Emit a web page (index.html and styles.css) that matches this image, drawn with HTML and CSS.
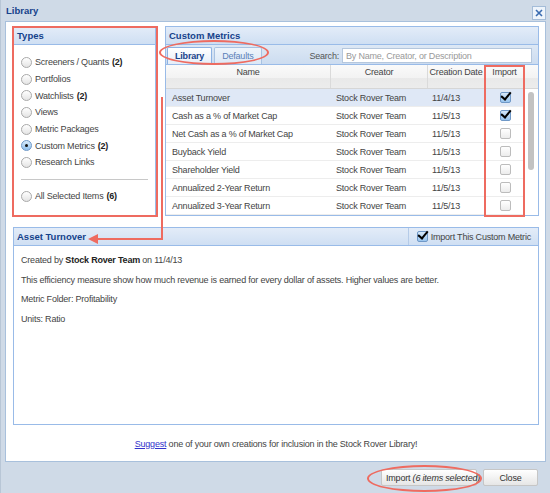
FILE: index.html
```html
<!DOCTYPE html>
<html lang="en">
<head>
    <meta charset="UTF-8">
    <title>Library</title>
    <link rel="stylesheet" href="styles.css">
</head>
<body>
    <div class="window">
        <div class="win-title">
            <span>Library</span>
            <span class="win-close">
                <svg width="10" height="10" viewBox="0 0 10 10"><path d="M2 2 L8 8 M8 2 L2 8" stroke="#3a6bb0" stroke-width="1.6"/></svg>
            </span>
        </div>

        <div class="win-body">
            <div class="top-row">
                <div class="panel types">
                    <div class="panel-header">Types</div>
                    <div class="types-body">
                        <label class="radio"><span class="dot"></span>Screeners / Quants <b>(2)</b></label>
                        <label class="radio"><span class="dot"></span>Portfolios</label>
                        <label class="radio"><span class="dot"></span>Watchlists <b>(2)</b></label>
                        <label class="radio"><span class="dot"></span>Views</label>
                        <label class="radio"><span class="dot"></span>Metric Packages</label>
                        <label class="radio"><span class="dot on"></span>Custom Metrics <b>(2)</b></label>
                        <label class="radio"><span class="dot"></span>Research Links</label>
                        <div class="sep"></div>
                        <label class="radio"><span class="dot"></span>All Selected Items <b>(6)</b></label>
                    </div>
                </div>

                <div class="panel metrics">
                    <div class="panel-header">Custom Metrics</div>
                    <div class="tabbar">
                        <span class="tab active">Library</span>
                        <span class="tab">Defaults</span>
                        <span class="search-label">Search:</span>
                        <span class="search-box">By Name, Creator, or Description</span>
                    </div>
                    <div class="grid">
                        <div class="grid-head">
                            <span class="c-name">Name</span>
                            <span class="c-creator">Creator</span>
                            <span class="c-date">Creation Date</span>
                            <span class="c-import">Import</span>
                            <span class="c-scroll"></span>
                        </div>
                        <div class="grid-rows">
                            <div class="row selected">
                                <span class="c-name">Asset Turnover</span>
                                <span class="c-creator">Stock Rover Team</span>
                                <span class="c-date">11/4/13</span>
                                <span class="c-import"><span class="check on"></span></span>
                            </div>
                            <div class="row">
                                <span class="c-name">Cash as a % of Market Cap</span>
                                <span class="c-creator">Stock Rover Team</span>
                                <span class="c-date">11/5/13</span>
                                <span class="c-import"><span class="check on"></span></span>
                            </div>
                            <div class="row">
                                <span class="c-name">Net Cash as a % of Market Cap</span>
                                <span class="c-creator">Stock Rover Team</span>
                                <span class="c-date">11/5/13</span>
                                <span class="c-import"><span class="check"></span></span>
                            </div>
                            <div class="row">
                                <span class="c-name">Buyback Yield</span>
                                <span class="c-creator">Stock Rover Team</span>
                                <span class="c-date">11/5/13</span>
                                <span class="c-import"><span class="check"></span></span>
                            </div>
                            <div class="row">
                                <span class="c-name">Shareholder Yield</span>
                                <span class="c-creator">Stock Rover Team</span>
                                <span class="c-date">11/5/13</span>
                                <span class="c-import"><span class="check"></span></span>
                            </div>
                            <div class="row">
                                <span class="c-name">Annualized 2-Year Return</span>
                                <span class="c-creator">Stock Rover Team</span>
                                <span class="c-date">11/5/13</span>
                                <span class="c-import"><span class="check"></span></span>
                            </div>
                            <div class="row">
                                <span class="c-name">Annualized 3-Year Return</span>
                                <span class="c-creator">Stock Rover Team</span>
                                <span class="c-date">11/5/13</span>
                                <span class="c-import"><span class="check"></span></span>
                            </div>
                            <div class="scrollbar"><div class="thumb"></div></div>
                        </div>
                    </div>
                </div>
            </div>

            <div class="panel details">
                <div class="panel-header details-head">
                    <span>Asset Turnover</span>
                    <span class="import-this"><span class="check on"></span>Import This Custom Metric</span>
                </div>
                <div class="details-body">
                    <p>Created by <b>Stock Rover Team</b> on 11/4/13</p>
                    <p>This efficiency measure show how much revenue is earned for every dollar of assets. Higher values are better.</p>
                    <p>Metric Folder: Profitability</p>
                    <p>Units: Ratio</p>
                </div>
            </div>

            <div class="suggest"><a href="#">Suggest</a> one of your own creations for inclusion in the Stock Rover Library!</div>
        </div>

        <div class="win-footer">
            <button class="btn btn-import">Import <i>(6 items selected)</i></button>
            <button class="btn btn-close">Close</button>
        </div>
    </div>

    <!-- annotations drawn over the screenshot -->
    <div class="mark box-types"></div>
    <div class="mark box-import"></div>
    <div class="mark ring-tabs"></div>
    <div class="mark ring-button"></div>
    <div class="mark line-down"></div>
    <div class="mark line-left"></div>
    <div class="mark arrow-head"></div>
</body>
</html>
```

FILE: styles.css
```css
body {
    margin: 0;
    width: 550px;
    height: 493px;
    overflow: hidden;
    background-color: #cfdae7;
    font-family: "Liberation Sans", Arial, sans-serif;
    font-size: 9px;
    letter-spacing: -0.2px;
    color: #444;
    position: relative;
}
.window {
    height: 493px;
    box-sizing: border-box;
    border-left: 1px solid #b8c6d6;
    display: flex;
    flex-direction: column;
}
.win-title {
    height: 21px;
    padding: 0 5px;
    display: flex;
    align-items: center;
    justify-content: space-between;
    font-weight: bold;
    font-size: 9.5px;
    letter-spacing: 0;
    color: #15428b;
}
.win-close {
    width: 12px;
    height: 12px;
    margin-top: 4px;
    margin-right: -1px;
    border: 1px solid #a4bcd8;
    background-color: #eef4fb;
    display: flex;
    align-items: center;
    justify-content: center;
}
.win-body {
    height: 441px;
    margin: 0 4px 0 4px;
    background-color: #fff;
    border: 1px solid #a8c0dc;
    box-sizing: border-box;
    padding: 4px 6px 0 7px;
    display: flex;
    flex-direction: column;
}
.top-row {
    display: flex;
    gap: 9px;
    height: 190px;
}
.panel {
    border: 1px solid #99bbe8;
    display: flex;
    flex-direction: column;
    box-sizing: border-box;
}
.panel-header {
    height: 18px;
    flex: none;
    box-sizing: border-box;
    padding: 0 3px;
    display: flex;
    align-items: center;
    background: linear-gradient(#e3ecf8, #cfdff3);
    border-bottom: 1px solid #99bbe8;
    font-weight: bold;
    font-size: 9.5px;
    letter-spacing: 0;
    color: #15428b;
}
.types {
    width: 143px;
}
.types-body {
    padding: 9px 0 0 7px;
    display: flex;
    flex-direction: column;
}
.radio {
    display: flex;
    align-items: center;
    height: 16.7px;
    color: #444;
    white-space: nowrap;
}
.radio b {
    color: #222;
    margin-left: 3px;
}
.dot {
    width: 9px;
    height: 9px;
    border-radius: 50%;
    border: 1px solid #a9a9a9;
    background: linear-gradient(#fff, #e4e4e4);
    margin-right: 3px;
    display: flex;
    align-items: center;
    justify-content: center;
}
.dot.on {
    border-color: #6d98c8;
    background: linear-gradient(#d8ebfb, #8fc0ee);
}
.dot.on::after {
    content: "";
    width: 3px;
    height: 3px;
    border-radius: 50%;
    background-color: #111;
}
.sep {
    height: 1px;
    width: 127px;
    background-color: #c8c8c8;
    margin: 8px 0 8px 0;
}
.metrics {
    width: 374px;
}
.tabbar {
    height: 20px;
    flex: none;
    box-sizing: border-box;
    padding: 2px 6px 0 1px;
    display: flex;
    align-items: flex-end;
    background: linear-gradient(#dde8f5, #ccdcf0);
    border-bottom: 1px solid #99bbe8;
}
.tab {
    height: 17px;
    box-sizing: border-box;
    padding: 0 7px;
    margin-right: 2px;
    display: flex;
    align-items: center;
    border: 1px solid #a8c2e2;
    border-bottom: none;
    border-radius: 2px 2px 0 0;
    background: linear-gradient(#eef4fb, #dce8f6);
    color: #5b80b8;
}
.tab.active {
    background: linear-gradient(#ffffff, #e5edf8);
    color: #15428b;
    font-weight: bold;
    border-color: #8db2e3;
}
.search-label {
    margin-left: auto;
    align-self: center;
    color: #555;
    margin-right: 3px;
}
.search-box {
    width: 190px;
    height: 15px;
    align-self: center;
    box-sizing: border-box;
    border: 1px solid #b5c7dd;
    background-color: #fff;
    color: #999;
    padding: 0 3px;
    display: flex;
    align-items: center;
}
.grid {
    flex: 1;
    display: flex;
    flex-direction: column;
}
.grid-head,
.row {
    display: grid;
    grid-template-columns: 165px 97px 57px 40px 13px;
}
.grid-head {
    height: 23px;
    background: linear-gradient(#fafafa 0, #f3f3f3 55%, #e9e9e9 55%, #ececec 100%);
    border-bottom: 1px solid #d6d6d6;
    color: #444;
}
.grid-head span {
    text-align: center;
    padding-top: 2px;
    white-space: nowrap;
    border-right: 1px solid #dadada;
}
.grid-head .c-scroll {
    border-right: none;
}
.grid-rows {
    position: relative;
    flex: 1;
}
.row {
    height: 18px;
    align-items: center;
    border-bottom: 1px solid #ededed;
    box-sizing: border-box;
    grid-template-columns: 165px 97px 57px 40px;
    width: 359px;
    white-space: nowrap;
}
.row.selected {
    background-color: #dfe8f6;
}
.row .c-name {
    padding-left: 6px;
    overflow: hidden;
}
.row .c-creator {
    padding-left: 5px;
}
.row .c-date {
    padding-left: 4px;
}
.row .c-import {
    display: flex;
    justify-content: center;
}
.check {
    width: 9px;
    height: 9px;
    border: 1px solid #bcbcbc;
    border-radius: 2px;
    background: linear-gradient(#fff, #ececec);
    position: relative;
}
.check.on {
    border-color: #6f98c7;
    background: linear-gradient(#d6e8fa, #98c4ee);
}
.check.on::after {
    content: "";
    position: absolute;
    left: 2px;
    top: -3px;
    width: 4px;
    height: 8px;
    border-right: 2px solid #000;
    border-bottom: 2px solid #000;
    transform: rotate(40deg);
}
.scrollbar {
    position: absolute;
    right: 0;
    top: 0;
    width: 13px;
    height: 100%;
}
.thumb {
    margin: 3px 0 0 3px;
    width: 6px;
    height: 78px;
    border-radius: 3px;
    background-color: #c2c2c2;
}
.details {
    margin-top: 11px;
    height: 198px;
}
.details-head {
    justify-content: space-between;
    padding-right: 0;
}
.import-this {
    height: 100%;
    display: flex;
    align-items: center;
    border-left: 1px solid #b5cbe8;
    padding: 0 7px 0 8px;
    font-weight: normal;
    font-size: 9px;
    letter-spacing: -0.2px;
    color: #444;
}
.import-this .check {
    margin-right: 3px;
}
.details-body {
    padding: 4px 7px;
    color: #444;
    line-height: 11px;
}
.details-body p {
    margin: 5px 0 8.5px 0;
}
.details-body b {
    color: #222;
}
.suggest {
    text-align: center;
    margin-top: 14px;
    color: #444;
}
.suggest a {
    color: #3333cc;
}
.win-footer {
    flex: 1;
    display: flex;
    justify-content: flex-end;
    align-items: center;
    gap: 6px;
    padding: 0 12px 0 0;
}
.btn {
    height: 17px;
    padding: 0 4px;
    font-family: "Liberation Sans", Arial, sans-serif;
    font-size: 9px;
    letter-spacing: -0.2px;
    white-space: nowrap;
    color: #333;
    border: 1px solid #c6c6c6;
    border-radius: 2px;
    background: linear-gradient(#ffffff, #e6e6e6);
}
.btn-import {
    width: 96px;
}
.btn-close {
    width: 55px;
}
.mark {
    position: absolute;
    box-sizing: border-box;
}
.box-types {
    left: 12px;
    top: 26px;
    width: 146px;
    height: 191px;
    border: 2px solid #ee6b60;
}
.box-import {
    left: 484px;
    top: 65px;
    width: 41px;
    height: 152px;
    border: 2px solid #ee6b60;
}
.ring-tabs {
    left: 159px;
    top: 40px;
    width: 110px;
    height: 25px;
    border: 2px solid #ee6b60;
    border-radius: 50%;
}
.ring-button {
    left: 367px;
    top: 465px;
    width: 115px;
    height: 27px;
    border: 2px solid #ee6b60;
    border-radius: 50%;
}
.line-down {
    left: 161px;
    top: 97px;
    width: 2px;
    height: 143px;
    background-color: #ee6b60;
}
.line-left {
    left: 96px;
    top: 238px;
    width: 67px;
    height: 2px;
    background-color: #ee6b60;
}
.arrow-head {
    left: 88px;
    top: 234px;
    width: 0;
    height: 0;
    border-top: 5px solid transparent;
    border-bottom: 5px solid transparent;
    border-right: 10px solid #ee6b60;
}
```
